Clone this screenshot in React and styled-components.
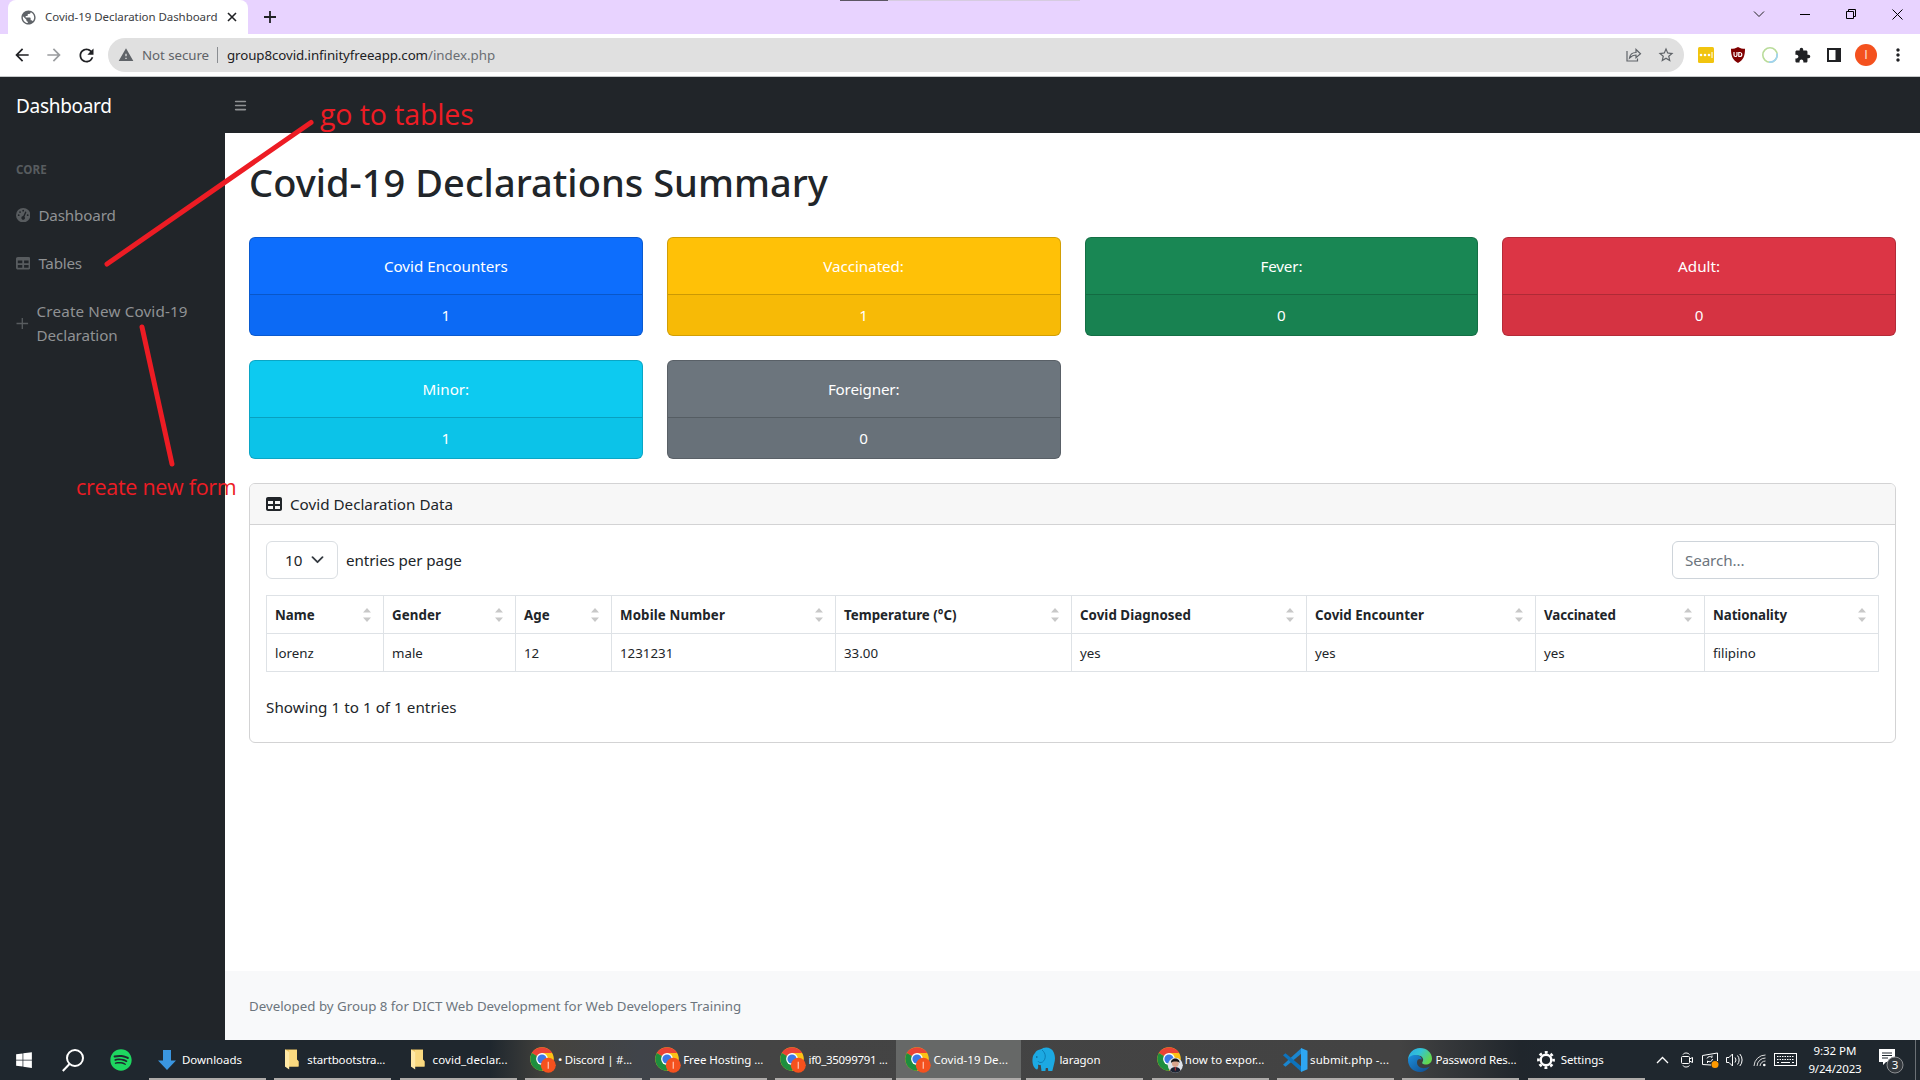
import React from "react";
import styled, { createGlobalStyle } from "styled-components";
import { FaGaugeHigh, FaTable, FaBars, FaWindows, FaSpotify } from "react-icons/fa6";
import { MdPublic, MdArrowBack, MdArrowForward, MdRefresh, MdWarning, MdStarBorder, MdExtension, MdMoreVert } from "react-icons/md";

const Global = createGlobalStyle`
  *, *::before, *::after { box-sizing: border-box; }
  body { margin: 0; background: #fff; overflow: hidden; font-family: "Noto Sans", "Segoe UI", sans-serif; color: #212529; }
  svg { display: block; flex: none; }
`;

const T = styled.span`
  display: inline-block;
  white-space: nowrap;
  letter-spacing: ${(p) => p.$ls || 0}px;
`;

const Screen = styled.div`
  position: relative;
  width: 1920px;
  height: 1080px;
  display: flex;
  flex-direction: column;
  overflow: hidden;
`;

/* ---------- browser ---------- */
const TabStrip = styled.div`
  height: 34px;
  background: #e8d3ff;
  display: flex;
  justify-content: space-between;
  padding-left: 8px;
`;
const TabGroup = styled.div`
  display: flex;
  align-items: center;
`;
const Tab = styled.div`
  width: 240px;
  height: 34px;
  background: #fff;
  border-radius: 8px 8px 0 0;
  display: flex;
  align-items: center;
  padding: 0 11px 0 12px;
  font-size: 11.5px;
  line-height: 34px;
  color: #3c4043;
`;
const TabTitle = styled.div`
  flex: 1;
  margin-left: 8px;
`;
const NewTab = styled.div`
  margin-left: 15px;
`;
const WindowButtons = styled.div`
  display: flex;
`;
const WindowButton = styled.div`
  width: 46px;
  height: 28px;
  display: flex;
  align-items: center;
  justify-content: center;
`;
const Toolbar = styled.div`
  height: 43px;
  background: #fff;
  border-bottom: 1px solid #c6c9ca;
  display: flex;
  align-items: center;
  padding: 0 6px;
`;
const NavButton = styled.div`
  width: 32px;
  height: 34px;
  display: flex;
  align-items: center;
  justify-content: center;
  color: ${(p) => p.$c || "#202124"};
`;
const AddressBar = styled.div`
  flex: 1;
  height: 34px;
  margin: 0 6px;
  border-radius: 17px;
  background: #e0e0e0;
  display: flex;
  align-items: center;
  padding: 0 2px 0 10px;
  font-size: 13.3px;
  color: #5f6368;
`;
const Security = styled.div`
  display: flex;
  align-items: center;
  width: 100px;
  gap: 8px;
  margin-right: 9px;
  border-right: 1px solid #8a8d91;
  height: 16px;
`;
const Url = styled.div`
  flex: 1;
  color: #202124;
  white-space: nowrap;
`;
const UrlPath = styled(T)`
  color: #6a6e73;
`;
const Avatar = styled.div`
  width: 22px;
  height: 22px;
  border-radius: 50%;
  background: #f4511e;
  color: #ffd9cc;
  font-family: Roboto, sans-serif;
  font-size: 13px;
  line-height: 22px;
  text-align: center;
`;
const PageLoad = styled.div`
  position: absolute;
  top: 0;
  left: 840px;
  width: 240px;
  height: 1px;
  background: linear-gradient(90deg, #5c5663 0 48px, #d6cce0 48px);
`;

/* ---------- app ---------- */
const Page = styled.div`
  height: 963px;
  display: flex;
  flex-direction: column;
  background: #fff;
`;
const TopNav = styled.div`
  height: 56px;
  background: #212529;
  display: flex;
  align-items: center;
`;
const Brand = styled.div`
  width: 225px;
  padding: 2px 0 0 16px;
  font-size: 19px;
  line-height: 30px;
  color: #fff;
`;
const Burger = styled.div`
  margin-left: 9px;
  color: #909294;
`;
const Columns = styled.div`
  flex: 1;
  display: flex;
  min-height: 0;
`;
const Sidebar = styled.div`
  width: 225px;
  background: #212529;
  color: #909294;
  font-size: 15.2px;
  line-height: 24px;
`;
const Heading = styled.div`
  padding: 28px 16px 12px;
  font-size: 11.6px;
  line-height: 18px;
  font-weight: 700;
  color: #585c5f;
`;
const SideLink = styled.div`
  display: flex;
  align-items: center;
  padding: 12px 16px;
  gap: 8px;
  svg { color: #585c5f; }
`;
const Content = styled.div`
  flex: 1;
  display: flex;
  flex-direction: column;
`;
const Main = styled.div`
  flex: 1;
  padding: 24px 24px 0;
`;
const Title = styled.h1`
  margin: 0 0 30px;
  font-size: 38px;
  line-height: 50px;
  font-weight: 500;
`;
const CardGrid = styled.div`
  display: grid;
  grid-template-columns: repeat(4, 1fr);
  gap: 24px;
  margin-bottom: 24px;
`;
const Stat = styled.div`
  border: 1px solid rgba(0, 0, 0, 0.175);
  border-radius: 6px;
  overflow: hidden;
  background: ${(p) => p.$bg};
  color: #fff;
  text-align: center;
  font-size: 15.2px;
  line-height: 24px;
`;
const StatBody = styled.div`
  padding: 16px;
`;
const StatFoot = styled.div`
  padding: 8px 16px;
  background: rgba(0, 0, 0, 0.03);
  border-top: 1px solid rgba(0, 0, 0, 0.175);
`;
const Panel = styled.div`
  height: 260px;
  border: 1px solid #d3d3d4;
  border-radius: 6px;
  overflow: hidden;
  font-size: 15.2px;
  line-height: 24px;
`;
const PanelHead = styled.div`
  height: 41px;
  padding: 0 16px;
  display: flex;
  align-items: center;
  gap: 8px;
  background: #f7f7f7;
  border-bottom: 1px solid #d3d3d4;
`;
const PanelBody = styled.div`
  padding: 16px;
`;
const Controls = styled.div`
  display: flex;
  justify-content: space-between;
  margin-bottom: 16px;
`;
const PerPage = styled.div`
  display: flex;
  align-items: center;
  gap: 8px;
`;
const Select = styled.div`
  width: 72px;
  height: 38px;
  border: 1px solid #dadee2;
  border-radius: 6px;
  padding: 0 13px 0 18px;
  display: flex;
  align-items: center;
  justify-content: space-between;
`;
const Search = styled.div`
  width: 207px;
  height: 38px;
  border: 1px solid #ced4da;
  border-radius: 6px;
  padding: 0 12px;
  line-height: 36px;
  color: #6c757d;
`;
const Table = styled.table`
  width: 1613px;
  table-layout: fixed;
  border-collapse: collapse;
  font-size: 13.3px;
  line-height: 21px;
  th, td {
    border: 1px solid #dee2e6;
    height: 38px;
    padding: 2px 8px 0;
    text-align: left;
    vertical-align: middle;
  }
`;
const HeadCell = styled.div`
  display: flex;
  align-items: center;
  justify-content: space-between;
  padding-right: 4px;
  svg { margin-top: -2px; }
`;
const Info = styled.div`
  margin-top: 23px;
`;
const Footer = styled.div`
  height: 69px;
  padding: 25px 24px 23px;
  background: #f8f9fa;
  color: #6c757d;
  font-size: 13.3px;
  line-height: 21px;
`;

/* ---------- annotations ---------- */
const Ink = styled.svg`
  position: absolute;
  left: 0;
  top: 0;
  pointer-events: none;
`;
const Note = styled.div`
  position: absolute;
  left: ${(p) => p.$x}px;
  top: ${(p) => p.$y}px;
  color: #ed1c24;
  font-family: "Open Sans", sans-serif;
  font-size: ${(p) => p.$s}px;
  line-height: 40px;
`;

/* ---------- taskbar ---------- */
const Taskbar = styled.div`
  height: 40px;
  display: flex;
  color: #fff;
  font-size: 11.5px;
  background: linear-gradient(90deg, #1f272e 0, #1f272e 490px, #45433e 550px, #40444a 640px, #444 760px, #434343 1400px, #20262c 1520px, #1f272e 1560px);
`;
const Pinned = styled.div`
  width: ${(p) => p.$w}px;
  padding-right: ${(p) => p.$pr || 0}px;
  flex: none;
  display: flex;
  align-items: center;
  justify-content: center;
`;
const Task = styled.div`
  flex: none;
  width: ${(p) => (p.$active ? 125 : 117)}px;
  margin-right: ${(p) => (p.$active ? 5 : 8.3)}px;
  margin-left: ${(p) => (p.$active ? -4.3 : 0)}px;
  padding-left: ${(p) => (p.$active ? 8 : 4)}px;
  background: ${(p) => (p.$active ? "#666867" : "none")};
  border-bottom: 2px solid #aeaba9;
  padding-top: 1px;
  display: flex;
  align-items: center;
`;
const TaskIcon = styled.div`
  width: 28px;
  display: flex;
  justify-content: center;
  margin-right: 1px;
`;
const Tray = styled.div`
  flex: 1;
  display: flex;
  align-items: center;
`;
const TrayIcon = styled.div`
  width: ${(p) => p.$w}px;
  display: flex;
  justify-content: center;
`;
const Clock = styled.div`
  width: 68px;
  line-height: 18px;
  text-align: center;
`;
const Notice = styled.div`
  width: 46px;
  padding: 4px 0 0 10px;
`;
const ShowDesktop = styled.div`
  height: 40px;
  border-left: 1px solid #6b7075;
  width: 5px;
`;

const ChromeLogo = ({ children }) => (
  <svg width="26" height="26" viewBox="0 0 26 26">
    <circle cx="12" cy="12" r="11.8" fill="#fbc116" />
    <path d="M12 12 1.8 6.1A11.8 11.8 0 0 1 22.2 6.1H12z" fill="#ea4335" />
    <path d="M12 12 1.8 6.1A11.8 11.8 0 0 0 12 23.8L17.1 15z" fill="#1e8e3e" />
    <circle cx="12" cy="12" r="5.9" fill="#fff" />
    <circle cx="12" cy="12" r="4.6" fill="#3b78e7" />
    {children}
  </svg>
);
const ChromeWork = () => (
  <ChromeLogo>
    <circle cx="18.3" cy="18.3" r="7.5" fill="#f4511e" />
    <path d="M18.3 14.8v7" stroke="#ffb49c" strokeWidth="1.4" />
  </ChromeLogo>
);
const ChromePerson = () => (
  <ChromeLogo>
    <circle cx="18.3" cy="18.3" r="7.5" fill="#dfe3ea" />
    <path d="M13 23.6c1-3 3-3.6 5.3-3.6s4.3.6 5.3 3.6a7.5 7.5 0 0 1-10.6 0z" fill="#1c2333" />
    <circle cx="18.3" cy="16.5" r="3.4" fill="#d9a58c" />
    <path d="M14 16c-.5-6 9-6 8.6 0-1-1.8-7-2-8.6 0z" fill="#161616" />
    <path d="M18.3 20v3.5" stroke="#c33" strokeWidth="1" />
  </ChromeLogo>
);
const Folder = () => (
  <svg width="16" height="21" viewBox="0 0 16 21">
    <path d="M1 .5h12v10l1.500 1.500v5.500H1z" fill="#f0c660" />
    <path d="M5 1h8v10l1.500 1.500v5H5z" fill="#f9d980" />
    <path d="M1 .5 5.200 3v17.500L1 17.500z" fill="#ffe9a6" />
  </svg>
);
const DownArrow = () => (
  <svg width="18" height="20" viewBox="0 0 18 20"><path d="M5 0h8v10.500h5L9 20l-9-9.500h5z" fill="#3a96e0" /></svg>
);
const Elephant = () => (
  <svg width="24" height="25" viewBox="0 0 24 25">
    <path d="M3 6C5 2 9 3 11 1c4-1.500 9 0 10.500 4 1.500 3 2 7 .8 11-.6 3-1.300 5-2 8h-4l-.5-3h-2l-.4 3H9.500L8.700 18c-1.200 0-2 0-2.700-.5.200 2 .5 3.500-.8 5C2 22 0 17 .5 12 .7 9 1.500 7.500 3 6z" fill="#1ca9e2" />
    <path d="M10 3c4 3 4.500 9 .5 12-1.800 1-3.800.5-4.500-.8" stroke="#0b7db5" strokeWidth="1" fill="none" />
    <circle cx="4.8" cy="10" r=".8" fill="#08557e" />
  </svg>
);
const VsCode = () => (
  <svg width="25" height="24" viewBox="0 0 25 24">
    <path d="M18.500 5.500 2.500 18.800 0 16.800 18.500 0z" fill="#1b86cf" />
    <path d="M18.500 18.500 2.500 5.200 0 7.200 18.500 24z" fill="#0d73bd" />
    <path d="M18 0 24.500 2.800v18.400L18 24z" fill="#2ea7f2" />
  </svg>
);
const Edge = () => (
  <svg width="24" height="24" viewBox="0 0 24 24">
    <defs>
      <linearGradient id="eg" x1="0" y1="0" x2="1" y2=".5"><stop offset="0" stopColor="#2aa7e6" /><stop offset=".5" stopColor="#33c3d6" /><stop offset="1" stopColor="#63d64f" /></linearGradient>
      <linearGradient id="eb" x1="0" y1="0" x2="1" y2="1"><stop offset="0" stopColor="#1b8fdc" /><stop offset="1" stopColor="#114a8c" /></linearGradient>
    </defs>
    <path d="M0 12C.2 5 5.500 0 12 0c7 0 12 5 12 10.500 0 4-3 6-6.200 6-2.800 0-4.300-1-3.300-2.500 2-3-.5-6.500-4.500-6.500C5 7.500 1 9 0 12z" fill="url(#eg)" />
    <path d="M0 12C.5 8.500 5 6.500 9.500 7.300c3 .6 4.500 2.700 4 4.500C11 10 9 12 9 14.500c0 5 6 7.500 12.800 4C19.500 22 16 24 12 24 5 24 0 18.500 0 12z" fill="url(#eb)" />
  </svg>
);
const Gear = () => (
  <svg width="18" height="18" viewBox="0 0 18 18" fill="none" stroke="#fff">
    <circle cx="9" cy="9" r="5.3" strokeWidth="2.4" />
    <circle cx="9" cy="9" r="7.6" strokeWidth="2.6" strokeDasharray="2.900 3.070" strokeDashoffset="1.450" />
  </svg>
);

const windowTasks = [
  { label: "Downloads", ls: -0.03, Icon: DownArrow },
  { label: "startbootstra...", ls: -0.13, Icon: Folder },
  { label: "covid_declar...", ls: 0.08, Icon: Folder },
  { label: "• Discord | #...", ls: -0.2, Icon: ChromeWork },
  { label: "Free Hosting ...", ls: -0.06, Icon: ChromeWork },
  { label: "if0_35099791 ...", ls: -0.28, Icon: ChromeWork },
  { label: "Covid-19 De...", ls: 0.05, Icon: ChromeWork, active: true },
  { label: "laragon", ls: -0.08, Icon: Elephant },
  { label: "how to expor...", ls: 0.08, Icon: ChromePerson },
  { label: "submit.php -...", ls: 0.08, Icon: VsCode },
  { label: "Password Res...", ls: -0.16, Icon: Edge },
  { label: "Settings", ls: -0.1, Icon: Gear },
];
const stats = [
  { label: "Covid Encounters", ls: -0.01, value: 1, bg: "#0d6efd" },
  { label: "Vaccinated:", ls: -0.06, value: 1, bg: "#ffc107" },
  { label: "Fever:", ls: -0.13, value: 0, bg: "#198754" },
  { label: "Adult:", ls: 0.02, value: 0, bg: "#dc3545" },
  { label: "Minor:", ls: 0, value: 1, bg: "#0dcaf0" },
  { label: "Foreigner:", ls: -0.17, value: 0, bg: "#6c757d" },
];
const columns = [
  { name: "Name", ls: -0.02, width: 117, value: "lorenz" },
  { name: "Gender", ls: 0.08, width: 132, value: "male" },
  { name: "Age", ls: 0.1, width: 96, value: "12" },
  { name: "Mobile Number", ls: 0.13, width: 224, value: "1231231" },
  { name: "Temperature (°C)", ls: 0.01, width: 236, value: "33.00" },
  { name: "Covid Diagnosed", ls: 0.06, width: 235, value: "yes" },
  { name: "Covid Encounter", ls: 0.05, width: 229, value: "yes" },
  { name: "Vaccinated", ls: -0.1, width: 169, value: "yes" },
  { name: "Nationality", ls: -0.07, width: 174, value: "filipino" },
];

export default function App() {
  return (
    <Screen>
      <Global />
      <TabStrip>
        <TabGroup>
          <Tab>
            <MdPublic size={17} color="#5f6368" />
            <TabTitle><T $ls={-0.06}>Covid-19 Declaration Dashboard</T></TabTitle>
            <svg width="10" height="10" viewBox="0 0 10 10" stroke="#202124" strokeWidth="1.6"><path d="M1 1l8 8M9 1l-8 8" /></svg>
          </Tab>
          <NewTab><svg width="14" height="14" viewBox="0 0 14 14" stroke="#202124" strokeWidth="1.8"><path d="M7 1v12M1 7h12" /></svg></NewTab>
        </TabGroup>
        <WindowButtons>
          <WindowButton><svg width="12" height="8" viewBox="0 0 12 8" fill="none" stroke="#222"><path d="M1 1.5l5 5 5-5" /></svg></WindowButton>
          <WindowButton><svg width="10" height="1"><rect width="10" height="1" fill="#000" /></svg></WindowButton>
          <WindowButton><svg width="10" height="10" fill="none" stroke="#000"><path d="M.5 2.5h7v7h-7zM2.5 2.5v-2h7v7h-2" /></svg></WindowButton>
          <WindowButton><svg width="11" height="11" stroke="#000"><path d="M.5.5l10 10M10.5.5l-10 10" /></svg></WindowButton>
        </WindowButtons>
      </TabStrip>
      <Toolbar>
        <NavButton><MdArrowBack size={20} /></NavButton>
        <NavButton $c="#9a9c9f"><MdArrowForward size={20} /></NavButton>
        <NavButton><MdRefresh size={21} /></NavButton>
        <AddressBar>
          <Security><MdWarning size={16} /><T $ls={-0.06}>Not secure</T></Security>
          <Url><T $ls={-0.08}>group8covid.infinityfreeapp.com</T><UrlPath>/index.php</UrlPath></Url>
          <NavButton><svg width="16" height="14" viewBox="0 0 16 14" fill="none" stroke="#5f6368" strokeWidth="1.2"><path d="M1 3v10h10.500v-2.500M3.500 10C4 6.500 6.500 4.500 10 4.500V1.500l4.500 4.200-4.500 4V7C7.500 7 5.500 8 3.500 10z" /></svg></NavButton>
          <NavButton $c="#5f6368"><MdStarBorder size={18} /></NavButton>
        </AddressBar>
        <NavButton><svg width="16" height="16"><rect width="16" height="16" rx="1.5" fill="#f1c40f" /><g fill="#fff"><circle cx="3" cy="8" r="1.3" /><circle cx="7" cy="8" r="1.3" /><circle cx="11" cy="8" r="1.3" /><rect x="13.5" y="5" width="1" height="6" /></g></svg></NavButton>
        <NavButton><svg width="16" height="16" viewBox="0 0 16 16"><path d="M8 0c2 1.300 4.500 1.800 7 1.800C15 9 13.500 13 8 16 2.500 13 1 9 1 1.800 3.500 1.800 6 1.300 8 0z" fill="#800000" /><path d="M4 5v3a1.500 1.500 0 0 0 3 0V5M8.800 5.500v4h1a2 2 0 0 0 0-4z" fill="none" stroke="#fff" strokeWidth="1.2" /></svg></NavButton>
        <NavButton><svg width="18" height="18" viewBox="0 0 18 18" fill="none" strokeWidth="1.6"><circle cx="9" cy="9" r="7.2" stroke="#b9dc9a" /><path d="M16 7.500A7.200 7.200 0 0 1 8 16.100" stroke="#9fd2f2" /></svg></NavButton>
        <NavButton><MdExtension size={17} /></NavButton>
        <NavButton><svg width="14" height="14"><path d="M0 0h14v14H0zM2 2v10h6.500V2z" fill="#202124" fillRule="evenodd" /></svg></NavButton>
        <NavButton><Avatar>I</Avatar></NavButton>
        <NavButton><MdMoreVert size={20} /></NavButton>
      </Toolbar>
      <PageLoad />

      <Page>
        <TopNav>
          <Brand><T $ls={-0.3}>Dashboard</T></Brand>
          <Burger><FaBars size={13} /></Burger>
        </TopNav>
        <Columns>
          <Sidebar>
            <Heading><T $ls={0.1}>CORE</T></Heading>
            <SideLink><FaGaugeHigh size={14.4} /><T $ls={-0.15}>Dashboard</T></SideLink>
            <SideLink><FaTable size={14.4} /><T $ls={-0.25}>Tables</T></SideLink>
            <SideLink>
              <svg width="12.6" height="13" viewBox="0 0 12.6 13" stroke="#585c5f" strokeWidth="1.3"><path d="M6.300 1v11M.5 6.500h11.600" /></svg>
              <div><T $ls={0.16}>Create New Covid-19</T><br /><T $ls={-0.08}>Declaration</T></div>
            </SideLink>
          </Sidebar>
          <Content>
            <Main>
              <Title><T $ls={0.03}>Covid-19 Declarations Summary</T></Title>
              <CardGrid>
                {stats.map(({ label, ls, value, bg }) => (
                  <Stat key={label} $bg={bg}>
                    <StatBody><T $ls={ls}>{label}</T></StatBody>
                    <StatFoot>{value}</StatFoot>
                  </Stat>
                ))}
              </CardGrid>
              <Panel>
                <PanelHead><FaTable size={16} /><T $ls={0.01}>Covid Declaration Data</T></PanelHead>
                <PanelBody>
                  <Controls>
                    <PerPage>
                      <Select><T>10</T><svg width="13" height="8" viewBox="0 0 13 8" fill="none" stroke="#343a40" strokeWidth="1.8" strokeLinecap="round" strokeLinejoin="round"><path d="M1.500 1.200l5 5 5-5" /></svg></Select>
                      <T $ls={-0.1}>entries per page</T>
                    </PerPage>
                    <Search><T $ls={-0.1}>Search...</T></Search>
                  </Controls>
                  <Table>
                    <colgroup>{columns.map((c) => <col key={c.name} width={c.width} />)}</colgroup>
                    <thead>
                      <tr>
                        {columns.map((c) => (
                          <th key={c.name}>
                            <HeadCell>
                              <T $ls={c.ls}>{c.name}</T>
                              <svg width="8" height="14" viewBox="0 0 8 14" fill="#c8c8c8"><path d="M4 0l4 4.500H0zM4 14l4-4.500H0z" /></svg>
                            </HeadCell>
                          </th>
                        ))}
                      </tr>
                    </thead>
                    <tbody>
                      <tr>{columns.map((c) => <td key={c.name}>{c.value}</td>)}</tr>
                    </tbody>
                  </Table>
                  <Info><T $ls={0.04}>Showing 1 to 1 of 1 entries</T></Info>
                </PanelBody>
              </Panel>
            </Main>
            <Footer><T $ls={-0.01}>Developed by Group 8 for DICT Web Development for Web Developers Training</T></Footer>
          </Content>
        </Columns>
      </Page>

      <Taskbar>
        <Pinned $w={48}><FaWindows size={18} /></Pinned>
        <Pinned $w={49}><svg width="22" height="23" viewBox="0 0 22 23" fill="none" stroke="#fff" strokeWidth="2"><circle cx="13" cy="9" r="8" /><path d="M7.500 15L.8 22" /></svg></Pinned>
        <Pinned $w={52} $pr={4}><FaSpotify size={22} color="#1ed760" /></Pinned>
        {windowTasks.map(({ label, ls, Icon, active }) => (
          <Task key={label} $active={active}>
            <TaskIcon><Icon /></TaskIcon>
            <T $ls={ls}>{label}</T>
          </Task>
        ))}
        <Tray>
          <TrayIcon $w={20}><svg width="13" height="8" fill="none" stroke="#fff" strokeWidth="1.3"><path d="M1 7l5.500-5.500L12 7" /></svg></TrayIcon>
          <TrayIcon $w={28}><svg width="12" height="16" viewBox="0 0 12 16" fill="none" stroke="#fff"><rect x=".5" y="4.5" width="8" height="7" rx="1" /><path d="M8.500 7l3-1.500v5l-3-1.500M2 2.500C3 .5 7 .5 8.500 2.500M2 13.500c1 2 5 2 6.500 0" /></svg></TrayIcon>
          <TrayIcon $w={20}><svg width="17" height="16" viewBox="0 0 17 16" fill="none" stroke="#fff"><path d="M.5 3.500 15.500 1v8M.5 3.500v9L9 13M5 6.500a3 3 0 0 1 5-1V3.500M10.500 7a3 3 0 0 1-5 2v2" /><circle cx="13" cy="12.5" r="3.5" fill="#ff9a00" stroke="none" /></svg></TrayIcon>
          <TrayIcon $w={28}><svg width="17" height="14" viewBox="0 0 17 14" fill="none" stroke="#fff"><path d="M.5 4.500h2.500L6.500 1v12L3 9.500H.5zM9 4.500a4 4 0 0 1 0 5M11.500 2.500a7 7 0 0 1 0 9M13.800 1a9 9 0 0 1 0 12" /></svg></TrayIcon>
          <TrayIcon $w={22}><svg width="13" height="13" viewBox="0 0 13 13" fill="none" stroke="#ddd"><path d="M1 12A11.500 11.500 0 0 1 12.500 1M4 12a8.500 8.500 0 0 1 8.500-8M7 12a5.500 5.500 0 0 1 5.500-5" /><circle cx="11.3" cy="11" r="1.3" fill="#fff" stroke="none" /></svg></TrayIcon>
          <TrayIcon $w={30}><svg width="23" height="14" viewBox="0 0 23 14" fill="none" stroke="#fff"><rect x=".5" y=".5" width="22" height="12" /><path d="M3 3.500h17M3 6.500h17" strokeDasharray="1.500 1" /><path d="M3 9.500h2M7 9.500h9M18 9.500h2" /></svg></TrayIcon>
          <Clock><T $ls={-0.03}>9:32 PM</T><T $ls={-0.18}>9/24/2023</T></Clock>
          <Notice><svg width="26" height="26" viewBox="0 0 26 26"><path d="M0 0h16v13H7l-3 3v-3H0z" fill="#fff" /><path d="M3 4h10M3 6.500h10M3 9h6" stroke="#1f272e" /><circle cx="16" cy="16" r="8" fill="#33383d" stroke="#8c8f92" /><text x="16" y="20" textAnchor="middle" fontSize="11.5" fill="#fff">3</text></svg></Notice>
        </Tray>
        <ShowDesktop />
      </Taskbar>

      <Ink width="520" height="500" stroke="#ed1c24" strokeWidth="5" strokeLinecap="round">
        <path d="M107 264L311 122.500M142 327L172 464" />
      </Ink>
      <Note $x={320} $y={94} $s={28.5}><T $ls={-0.1}>go to tables</T></Note>
      <Note $x={76} $y={467} $s={21.5}><T $ls={-0.29}>create new form</T></Note>
    </Screen>
  );
}
